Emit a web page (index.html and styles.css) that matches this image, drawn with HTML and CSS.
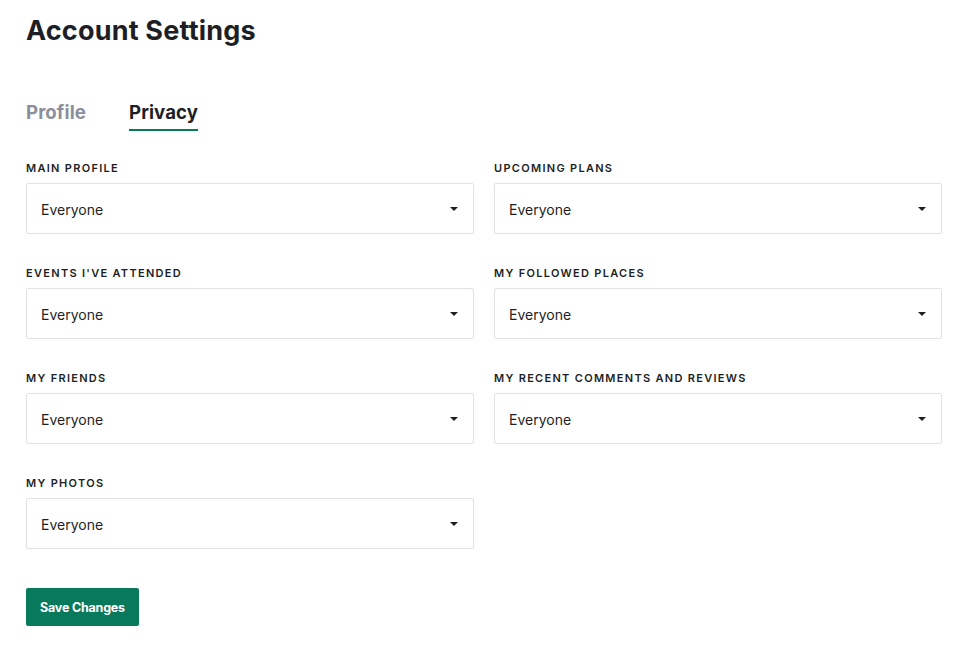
FILE: index.html
```html
<!DOCTYPE html>
<html lang="en">
<head>
<meta charset="utf-8">
<title>Account Settings</title>
<link rel="stylesheet" href="styles.css">
</head>
<body>
<main class="page">
  <h1 class="title">Account Settings</h1>
  <nav class="tabs">
    <span class="tab">Profile</span>
    <span class="tab tab-active">Privacy</span>
  </nav>
  <form class="form">
    <div class="grid">
      <div class="field">
        <div class="label">Main Profile</div>
        <div class="select"><span>Everyone</span><span class="caret"></span></div>
      </div>
      <div class="field">
        <div class="label">Upcoming Plans</div>
        <div class="select"><span>Everyone</span><span class="caret"></span></div>
      </div>
      <div class="field">
        <div class="label">Events I've Attended</div>
        <div class="select"><span>Everyone</span><span class="caret"></span></div>
      </div>
      <div class="field">
        <div class="label">My Followed Places</div>
        <div class="select"><span>Everyone</span><span class="caret"></span></div>
      </div>
      <div class="field">
        <div class="label">My Friends</div>
        <div class="select"><span>Everyone</span><span class="caret"></span></div>
      </div>
      <div class="field">
        <div class="label">My Recent Comments and Reviews</div>
        <div class="select"><span>Everyone</span><span class="caret"></span></div>
      </div>
      <div class="field">
        <div class="label">My Photos</div>
        <div class="select"><span>Everyone</span><span class="caret"></span></div>
      </div>
    </div>
    <button type="button" class="save">Save Changes</button>
  </form>
</main>
</body>
</html>
```
FILE: styles.css
```css
* { box-sizing: border-box; }
html, body { margin: 0; padding: 0; background: #fff; }
body { font-family: Inter, "Open Sans", sans-serif; color: #1e1f24; }
.page { padding: 14px 18px 0 26px; }
.title {
  margin: 0;
  font-size: 27px;
  font-weight: 700;
  line-height: 34px;
  letter-spacing: 0.2px;
  color: #1e1f24;
}
.tabs {
  display: flex;
  gap: 43px;
  margin-top: 52px;
}
.tab {
  font-size: 18.6px;
  font-weight: 700;
  line-height: 24px;
  padding-bottom: 5px;
  color: #8b8e9c;
  border-bottom: 2px solid transparent;
  letter-spacing: 0.1px;
}
.tab-active {
  color: #1e1f24;
  border-bottom-color: #087a5b;
}
.form { margin-top: 30px; }
.grid {
  display: grid;
  grid-template-columns: 448px 448px;
  column-gap: 20px;
  row-gap: 32px;
}
.field { display: flex; flex-direction: column; gap: 8px; }
.label {
  font-size: 11px;
  font-weight: 600;
  line-height: 14px;
  letter-spacing: 1.3px;
  text-transform: uppercase;
  color: #1e1f24;
}
.select {
  height: 51px;
  border: 1px solid #e1e2e8;
  border-radius: 2px;
  display: flex;
  align-items: center;
  justify-content: space-between;
  padding: 1px 15px 0 14px;
  font-size: 14px;
  color: #1e1f24;
}
.caret {
  width: 0;
  height: 0;
  border-left: 4px solid transparent;
  border-right: 4px solid transparent;
  border-top: 4px solid #1e1f24;
}
.save {
  margin-top: 39px;
  height: 38px;
  padding: 0 14px;
  border: none;
  border-radius: 2px;
  background: #087a5b;
  color: #fff;
  font-family: Inter, sans-serif;
  font-size: 12.5px;
  font-weight: 700;
  letter-spacing: -0.2px;
}
```
